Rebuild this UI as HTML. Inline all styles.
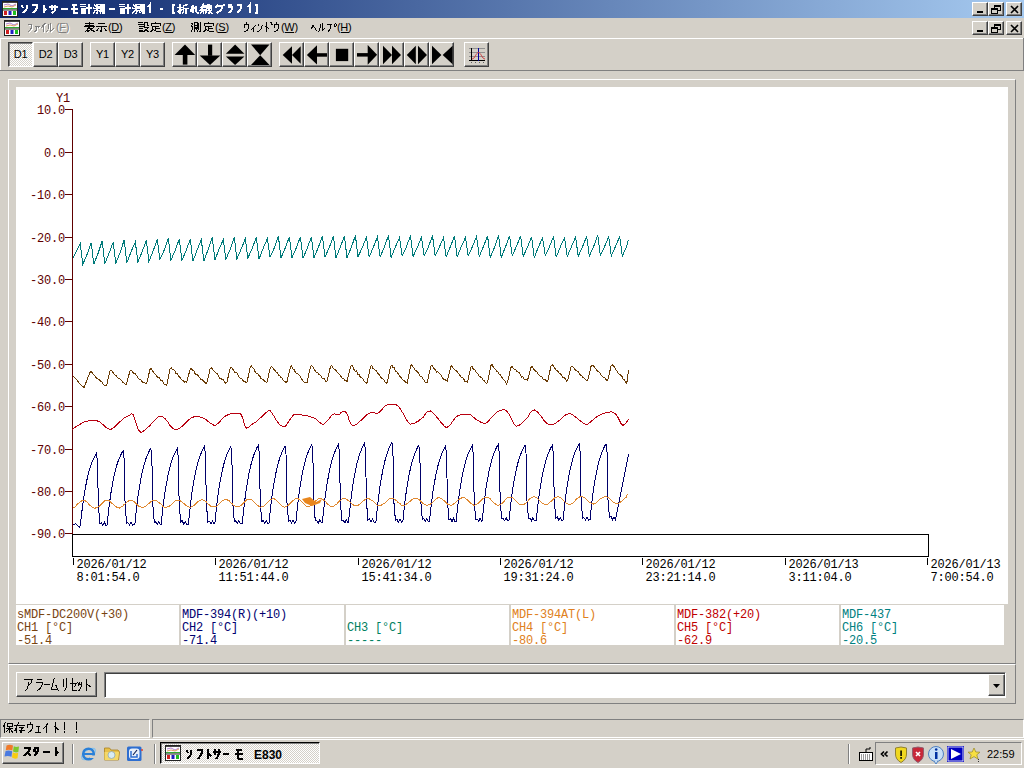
<!DOCTYPE html>
<html><head><meta charset="utf-8"><style>
*{box-sizing:border-box}
html,body{margin:0;padding:0}
body{width:1024px;height:768px;overflow:hidden;position:relative;background:#D4D0C8;font-family:"Liberation Sans",sans-serif;font-size:12px;color:#000}
.a{position:absolute}
.b{position:absolute;background:#D4D0C8;border-top:1px solid #fff;border-left:1px solid #fff;border-right:1px solid #404040;border-bottom:1px solid #404040;box-shadow:inset -1px -1px 0 #808080}
.b.pressed{border-top:1px solid #404040;border-left:1px solid #404040;border-right:1px solid #fff;border-bottom:1px solid #fff;box-shadow:inset 1px 1px 0 #808080;background:repeating-conic-gradient(#fff 0 25%,#D4D0C8 0 50%) 0 0/2px 2px}
.tbt{position:absolute;left:0;right:0;top:5px;text-align:center;font-size:11px;letter-spacing:-0.3px}
.title{left:0;top:0;width:1024px;height:18px;background:linear-gradient(to right,#0A246A,#A6CAF0)}
.ttext{left:20px;top:1px;color:#fff;font-weight:bold;font-size:13px;white-space:nowrap;letter-spacing:-0.3px}
.menu{top:20px;font-size:12px;white-space:nowrap}
.ax{position:absolute;font-family:"Liberation Mono",monospace;font-size:12px;color:#600000;letter-spacing:-0.2px;line-height:13px;white-space:nowrap;transform:scaleY(1.15)}
.dl{position:absolute;font-family:"Liberation Mono",monospace;font-size:12px;color:#000;line-height:13px;white-space:nowrap;letter-spacing:-0.2px;transform:scaleY(1.1);transform-origin:0 0}
.lc{position:absolute;top:605px;width:163px;height:40px;background:#fff;font-family:"Liberation Mono",monospace;font-size:12px;line-height:13px;white-space:nowrap;letter-spacing:-0.2px;overflow:hidden}
.lc div{transform:scaleY(1.12);transform-origin:0 0;margin-left:0px;height:13px;position:relative;top:2px}
.sunk{position:absolute;border-top:1px solid #808080;border-left:1px solid #808080;border-right:1px solid #fff;border-bottom:1px solid #fff}
</style></head><body>
<div class="a title"></div>
<div class="a" style="left:2px;top:1px"><svg width="16" height="16" viewBox="0 0 16 16"><rect x="0.5" y="0.5" width="15" height="15" fill="#fff" stroke="#222"/><rect x="1" y="7" width="14" height="1.2" fill="#3a3"/><rect x="1" y="1" width="14" height="1" fill="#444"/><polyline points="2,4 6,3 10,5 14,3" fill="none" stroke="#b080d0"/><polyline points="2,6 6,5 10,6 14,4" fill="none" stroke="#e0a060"/><rect x="2" y="10" width="3" height="4" fill="#d02020"/><rect x="6.5" y="10" width="3" height="4" fill="#2020c0"/><rect x="11" y="10" width="3" height="4" fill="#20c020"/><rect x="0" y="8.5" width="16" height="1" fill="#222"/></svg></div>

<div class="b wb" style="left:972px;top:2px;width:16px;height:14px"><div style="position:absolute;left:4px;top:8px;width:6px;height:2px;background:#000"></div></div>
<div class="b wb" style="left:988px;top:2px;width:16px;height:14px"><svg width="16" height="14" style="position:absolute;left:0;top:0"><rect x="5.5" y="2.5" width="6" height="5" fill="none" stroke="#000"/><line x1="5" y1="3" x2="12" y2="3" stroke="#000" stroke-width="2"/><rect x="2.5" y="5.5" width="6" height="5" fill="#D4D0C8" stroke="#000"/><line x1="2" y1="6" x2="9" y2="6" stroke="#000" stroke-width="2"/></svg></div>
<div class="b wb" style="left:1006px;top:2px;width:16px;height:14px"><svg width="16" height="14" style="position:absolute;left:0;top:0"><path d="M4,3 L11,10 M11,3 L4,10" stroke="#000" stroke-width="1.6"/></svg></div>
<div class="a" style="left:4px;top:20px"><svg width="16" height="16" viewBox="0 0 16 16"><rect x="0.5" y="0.5" width="15" height="15" fill="#fff" stroke="#222"/><rect x="1" y="7" width="14" height="1.2" fill="#3a3"/><rect x="1" y="1" width="14" height="1" fill="#444"/><polyline points="2,4 6,3 10,5 14,3" fill="none" stroke="#b080d0"/><polyline points="2,6 6,5 10,6 14,4" fill="none" stroke="#e0a060"/><rect x="2" y="10" width="3" height="4" fill="#d02020"/><rect x="6.5" y="10" width="3" height="4" fill="#2020c0"/><rect x="11" y="10" width="3" height="4" fill="#20c020"/><rect x="0" y="8.5" width="16" height="1" fill="#222"/></svg></div>

<div class="b wb" style="left:972px;top:21px;width:16px;height:14px"><div style="position:absolute;left:4px;top:8px;width:6px;height:2px;background:#000"></div></div>
<div class="b wb" style="left:988px;top:21px;width:16px;height:14px"><svg width="16" height="14" style="position:absolute;left:0;top:0"><rect x="5.5" y="2.5" width="6" height="5" fill="none" stroke="#000"/><line x1="5" y1="3" x2="12" y2="3" stroke="#000" stroke-width="2"/><rect x="2.5" y="5.5" width="6" height="5" fill="#D4D0C8" stroke="#000"/><line x1="2" y1="6" x2="9" y2="6" stroke="#000" stroke-width="2"/></svg></div>
<div class="b wb" style="left:1006px;top:21px;width:16px;height:14px"><svg width="16" height="14" style="position:absolute;left:0;top:0"><path d="M4,3 L11,10 M11,3 L4,10" stroke="#000" stroke-width="1.6"/></svg></div>
<div class="a" style="left:0;top:38px;width:1024px;height:1px;background:#fff"></div>
<div class="a" style="left:0;top:70px;width:1024px;height:1px;background:#808080"></div>
<div class="a" style="left:1023px;top:38px;width:1px;height:33px;background:#808080"></div>
<div class="a" style="left:0;top:38px;width:1px;height:32px;background:#fff"></div>
<div class="b pressed" style="left:8px;top:42px;width:25px;height:25px"><span class="tbt">D1</span></div>
<div class="b" style="left:33px;top:42px;width:25px;height:25px"><span class="tbt">D2</span></div>
<div class="b" style="left:58px;top:42px;width:25px;height:25px"><span class="tbt">D3</span></div>
<div class="b" style="left:90px;top:42px;width:25px;height:25px"><span class="tbt">Y1</span></div>
<div class="b" style="left:115px;top:42px;width:25px;height:25px"><span class="tbt">Y2</span></div>
<div class="b" style="left:140px;top:42px;width:25px;height:25px"><span class="tbt">Y3</span></div>
<div class="b" style="left:172px;top:42px;width:25px;height:25px"><svg width="25" height="25" style="position:absolute;left:0;top:0"><polygon points="1.6,11.9 12,1.6 22.2,11.9" fill="#000"/><rect x="9.8" y="11.5" width="4.6" height="10.1" fill="#000"/></svg></div>
<div class="b" style="left:197px;top:42px;width:25px;height:25px"><svg width="25" height="25" style="position:absolute;left:0;top:0"><polygon points="1.7,12.4 12,22.1 22.3,12.4" fill="#000"/><rect x="10" y="1.6" width="4.2" height="11.2" fill="#000"/></svg></div>
<div class="b" style="left:222px;top:42px;width:25px;height:25px"><svg width="25" height="25" style="position:absolute;left:0;top:0"><polygon points="2.9,10.8 12.1,1.6 21.4,10.8" fill="#000"/><polygon points="2.9,13.4 12.1,22.1 21.4,13.4" fill="#000"/></svg></div>
<div class="b" style="left:247px;top:42px;width:25px;height:25px"><svg width="25" height="25" style="position:absolute;left:0;top:0"><polygon points="3,1.6 21.5,1.6 12.2,12.2" fill="#000"/><polygon points="3,22.1 21.5,22.1 12.2,12.2" fill="#000"/></svg></div>
<div class="b" style="left:279px;top:42px;width:25px;height:25px"><svg width="25" height="25" style="position:absolute;left:0;top:0"><polygon points="2.7,11.9 12,3.2 12,20.7" fill="#000"/><polygon points="12,11.9 20.7,3.2 20.7,20.7" fill="#000"/></svg></div>
<div class="b" style="left:304px;top:42px;width:25px;height:25px"><svg width="25" height="25" style="position:absolute;left:0;top:0"><polygon points="1.9,11.9 12,2.3 12,21.6" fill="#000"/><rect x="11.5" y="10.2" width="10.5" height="3.5" fill="#000"/></svg></div>
<div class="b" style="left:329px;top:42px;width:25px;height:25px"><svg width="25" height="25" style="position:absolute;left:0;top:0"><rect x="5.9" y="5.8" width="12.3" height="12.3" fill="#000"/></svg></div>
<div class="b" style="left:354px;top:42px;width:25px;height:25px"><svg width="25" height="25" style="position:absolute;left:0;top:0"><polygon points="22.1,11.8 12.7,2 12.7,21.7" fill="#000"/><rect x="2" y="10.1" width="11" height="3.5" fill="#000"/></svg></div>
<div class="b" style="left:379px;top:42px;width:25px;height:25px"><svg width="25" height="25" style="position:absolute;left:0;top:0"><polygon points="3,2.8 12,12 3,21.3" fill="#000"/><polygon points="12,2.8 21,12 12,21.3" fill="#000"/></svg></div>
<div class="b" style="left:404px;top:42px;width:25px;height:25px"><svg width="25" height="25" style="position:absolute;left:0;top:0"><polygon points="1.8,12 10.8,2.8 10.8,21.3" fill="#000"/><polygon points="22,12 13,2.8 13,21.3" fill="#000"/></svg></div>
<div class="b" style="left:429px;top:42px;width:25px;height:25px"><svg width="25" height="25" style="position:absolute;left:0;top:0"><polygon points="2,2.8 11.4,12 2,21.3" fill="#000"/><polygon points="22.6,2.8 12.7,12 22.6,21.3" fill="#000"/></svg></div>
<div class="b" style="left:464px;top:42px;width:25px;height:25px"><svg width="25" height="25" style="position:absolute;left:0;top:0"><g stroke-width="1" shape-rendering="crispEdges"><line x1="4" y1="5.5" x2="20" y2="5.5" stroke="#909090"/><line x1="4" y1="9.5" x2="20" y2="9.5" stroke="#909090"/><line x1="4" y1="13.5" x2="20" y2="13.5" stroke="#909090"/><line x1="4" y1="17.5" x2="20" y2="17.5" stroke="#000"/><line x1="6.5" y1="5" x2="6.5" y2="18" stroke="#000"/><line x1="13.5" y1="5" x2="13.5" y2="18" stroke="#0000A0"/></g><path d="M7,16 C10,16 11,9.5 13.5,9.5 C16,9.5 17,16 20,16" fill="none" stroke="#D04040" stroke-width="1"/><g fill="#606060"><rect x="6" y="19" width="1" height="1"/><rect x="10" y="19" width="1" height="1"/><rect x="14" y="19" width="1" height="1"/><rect x="18" y="19" width="1" height="1"/></g></svg></div>
<!-- chart frame -->
<div class="a" style="left:8px;top:79px;width:1008px;height:585px;border-top:1px solid #fff;border-left:1px solid #fff;border-right:1px solid #808080;border-bottom:1px solid #808080"></div>
<div class="a" style="left:16px;top:87px;width:992px;height:517px;background:#fff"></div>
<svg class="a" style="left:0;top:0" width="1024" height="768">
<g stroke="#600000" stroke-width="1" shape-rendering="crispEdges">
<line x1="72.5" y1="109" x2="72.5" y2="534"/>
<line x1="65" y1="109.5" x2="72" y2="109.5"/><line x1="65" y1="152.5" x2="72" y2="152.5"/><line x1="65" y1="194.5" x2="72" y2="194.5"/><line x1="65" y1="237.5" x2="72" y2="237.5"/><line x1="65" y1="279.5" x2="72" y2="279.5"/><line x1="65" y1="321.5" x2="72" y2="321.5"/><line x1="65" y1="364.5" x2="72" y2="364.5"/><line x1="65" y1="406.5" x2="72" y2="406.5"/><line x1="65" y1="449.5" x2="72" y2="449.5"/><line x1="65" y1="491.5" x2="72" y2="491.5"/><line x1="65" y1="533.5" x2="72" y2="533.5"/>
</g>
<g stroke="#000" stroke-width="1" shape-rendering="crispEdges" fill="none">
<rect x="72.5" y="534.5" width="856" height="22"/>
<line x1="73.5" y1="558" x2="73.5" y2="565"/><line x1="215.5" y1="558" x2="215.5" y2="565"/><line x1="358.5" y1="558" x2="358.5" y2="565"/><line x1="500.5" y1="558" x2="500.5" y2="565"/><line x1="642.5" y1="558" x2="642.5" y2="565"/><line x1="785.5" y1="558" x2="785.5" y2="565"/><line x1="927.5" y1="558" x2="927.5" y2="565"/>
</g>
<polyline shape-rendering="crispEdges" fill="none" stroke="#007A7A" stroke-width="1" points="73.0,258.0 80.2,243.8 82.8,264.5 87.0,254.5 91.2,242.7 93.8,264.2 98.0,253.5 102.2,240.9 104.8,263.9 109.0,253.3 113.2,242.3 115.8,263.5 120.0,252.8 124.2,239.9 126.8,262.9 131.0,251.9 135.3,242.0 137.9,262.0 142.1,251.9 146.3,240.3 148.9,261.5 153.1,251.1 157.3,239.4 159.9,259.5 164.1,250.4 168.3,238.3 170.9,260.4 175.1,250.4 179.3,239.0 181.9,260.5 186.1,250.5 190.3,239.1 192.9,261.3 197.1,250.0 201.3,239.7 203.9,261.1 208.1,249.6 212.3,237.4 214.9,260.1 219.1,249.1 223.3,239.5 225.9,259.4 230.1,249.4 234.3,237.5 236.9,258.8 241.1,249.2 245.3,238.8 247.9,258.1 252.1,248.4 256.4,237.5 259.0,259.2 263.2,248.3 267.4,238.4 270.0,256.8 274.2,248.2 278.4,236.5 281.0,257.8 285.2,248.0 289.4,236.9 292.0,257.6 296.2,248.1 300.4,236.9 303.0,258.1 307.2,248.4 311.4,236.8 314.0,257.7 318.2,247.7 322.4,236.0 325.0,256.9 329.2,247.7 333.4,235.9 336.0,257.9 340.2,247.2 344.4,236.4 347.0,257.5 351.2,247.8 355.4,235.5 358.0,256.7 362.2,247.9 366.5,237.1 369.1,257.1 373.3,247.3 377.5,236.8 380.1,257.0 384.3,247.2 388.5,235.3 391.1,257.5 395.3,247.1 399.5,237.6 402.1,255.9 406.3,247.2 410.5,235.5 413.1,256.3 417.3,247.5 421.5,237.2 424.1,255.9 428.3,247.3 432.5,235.6 435.1,255.6 439.3,247.1 443.5,237.6 446.1,256.9 450.3,246.9 454.5,236.0 457.1,257.0 461.3,246.7 465.5,237.3 468.1,255.9 472.3,246.9 476.6,236.4 479.2,256.8 483.4,246.5 487.6,236.1 490.2,257.4 494.4,247.5 498.6,235.1 501.2,257.5 505.4,247.1 509.6,236.0 512.2,255.7 516.4,246.5 520.6,235.9 523.2,256.3 527.4,247.3 531.6,236.7 534.2,257.8 538.4,247.0 542.6,237.8 545.2,255.3 549.4,247.0 553.6,236.2 556.2,257.3 560.4,246.7 564.6,237.5 567.2,256.7 571.4,246.7 575.6,237.1 578.2,256.3 582.4,247.1 586.7,236.1 589.3,256.0 593.5,247.0 597.7,235.0 600.3,255.3 604.5,246.8 608.7,236.6 611.3,255.9 615.5,246.4 619.7,236.6 622.3,256.0 626.5,247.1 628.5,239.6"/>
<polyline shape-rendering="crispEdges" fill="none" stroke="#6A3C06" stroke-width="1" points="73.0,375.7 76.0,379.0 80.0,384.0 84.0,387.5 89.8,372.9 91.0,371.7 92.2,372.8 93.4,374.2 94.6,375.5 95.8,377.4 97.0,378.5 98.2,379.2 99.5,380.0 100.7,381.4 101.9,382.1 103.1,384.1 104.3,385.6 105.5,386.0 106.5,385.9 109.8,371.5 111.0,370.3 112.3,371.5 113.5,373.3 114.7,374.9 115.9,375.2 117.1,377.3 118.3,378.1 119.5,378.8 120.7,379.8 121.9,381.1 123.1,382.7 124.3,383.1 125.5,384.8 126.5,384.0 129.9,371.1 131.1,369.9 132.3,371.5 133.5,373.1 134.7,373.0 135.9,375.0 137.1,376.1 138.3,378.3 139.6,379.5 140.8,379.4 142.0,381.6 143.2,382.5 144.4,382.4 145.6,383.9 146.6,383.7 150.0,369.5 151.2,368.3 152.4,370.5 153.6,372.6 154.8,373.9 156.0,375.1 157.2,376.6 158.4,377.7 159.6,378.0 160.8,380.4 162.0,380.5 163.2,382.1 164.4,384.8 165.7,384.5 166.7,385.2 170.0,368.8 171.2,367.6 172.4,370.0 173.6,369.8 174.8,370.8 176.0,373.9 177.2,373.5 178.5,376.3 179.7,377.1 180.9,378.7 182.1,380.1 183.3,380.4 184.5,382.0 185.7,381.5 186.7,382.2 190.1,369.5 191.3,368.3 192.5,370.4 193.7,370.5 194.9,373.3 196.1,375.0 197.3,374.3 198.5,376.1 199.7,377.9 200.9,379.6 202.1,379.5 203.3,380.6 204.5,381.9 205.8,383.8 206.8,383.3 210.1,369.0 211.3,367.8 212.5,369.2 213.7,370.6 214.9,371.8 216.1,373.2 217.3,373.8 218.6,375.9 219.8,378.1 221.0,378.1 222.2,380.0 223.4,379.8 224.6,382.1 225.8,383.4 226.8,382.5 230.2,368.5 231.4,367.3 232.6,369.0 233.8,370.8 235.0,372.7 236.2,372.4 237.4,373.6 238.6,376.3 239.8,377.9 241.0,378.3 242.2,379.3 243.4,381.1 244.6,381.2 245.9,382.5 246.9,382.7 250.2,367.3 251.4,366.1 252.6,367.5 253.8,368.9 255.0,371.4 256.2,373.4 257.4,373.3 258.7,375.6 259.9,376.3 261.1,378.6 262.3,379.4 263.5,380.0 264.7,381.1 265.9,382.0 266.9,382.7 270.3,367.6 271.5,366.4 272.7,367.4 273.9,369.2 275.1,370.5 276.3,372.9 277.5,372.8 278.7,375.9 279.9,376.0 281.1,377.5 282.3,378.5 283.5,380.5 284.7,381.6 286.0,382.3 287.0,381.8 290.3,367.4 291.5,366.2 292.7,368.8 293.9,369.4 295.1,371.6 296.3,373.5 297.5,373.9 298.8,374.7 300.0,376.1 301.2,378.5 302.4,379.7 303.6,381.6 304.8,382.7 306.0,382.6 307.0,382.9 310.4,366.7 311.6,365.5 312.8,366.5 314.0,369.1 315.2,370.8 316.4,372.3 317.6,372.2 318.8,374.8 320.0,374.9 321.2,376.4 322.4,378.3 323.6,378.1 324.8,379.3 326.1,382.1 327.1,381.1 330.4,366.8 331.6,365.6 332.8,367.5 334.0,369.2 335.2,369.1 336.4,371.2 337.6,372.7 338.9,374.1 340.1,374.8 341.3,376.9 342.5,379.0 343.7,378.9 344.9,380.5 346.1,380.8 347.1,381.3 350.5,366.6 351.7,365.4 352.9,366.4 354.1,369.7 355.3,371.3 356.5,370.9 357.7,374.2 358.9,374.4 360.1,376.6 361.3,377.9 362.5,378.3 363.7,380.4 364.9,381.7 366.2,383.3 367.2,382.3 370.5,366.5 371.7,365.3 372.9,368.2 374.1,369.2 375.3,370.5 376.5,371.0 377.7,373.3 379.0,374.4 380.2,376.6 381.4,377.9 382.6,379.0 383.8,379.5 385.0,381.9 386.2,383.2 387.2,382.6 390.6,366.3 391.8,365.1 393.0,367.4 394.2,367.9 395.4,371.3 396.6,371.1 397.8,373.0 399.0,375.3 400.2,376.5 401.4,377.9 402.6,379.5 403.8,380.4 405.0,381.5 406.3,382.6 407.3,383.0 410.6,366.0 411.8,364.8 413.0,367.3 414.2,368.5 415.4,370.5 416.6,371.1 417.8,372.4 419.1,374.1 420.3,376.6 421.5,376.2 422.7,378.6 423.9,379.4 425.1,381.9 426.3,382.3 427.3,382.3 430.7,366.5 431.9,365.3 433.1,367.1 434.3,369.1 435.5,369.6 436.7,372.1 437.9,371.8 439.1,373.4 440.3,374.4 441.5,375.7 442.7,378.4 443.9,379.5 445.1,379.5 446.4,380.7 447.4,381.1 450.7,366.7 451.9,365.5 453.1,368.0 454.3,369.4 455.5,370.6 456.7,371.1 457.9,373.0 459.2,374.0 460.4,376.1 461.6,377.5 462.8,378.0 464.0,379.5 465.2,381.9 466.4,381.6 467.4,382.3 470.8,367.4 472.0,366.2 473.2,369.0 474.4,369.3 475.6,371.2 476.8,372.7 478.0,374.2 479.2,376.3 480.4,377.0 481.6,377.5 482.8,380.0 484.0,380.5 485.2,382.1 486.5,383.6 487.5,382.8 490.8,365.8 492.0,364.6 493.2,366.9 494.4,368.2 495.6,369.8 496.8,371.2 498.0,372.1 499.3,374.3 500.5,374.7 501.7,377.1 502.9,378.8 504.1,379.8 505.3,381.4 506.5,383.7 507.5,382.3 510.9,367.5 512.1,366.3 513.3,368.5 514.5,369.4 515.7,369.4 516.9,371.2 518.1,372.1 519.3,372.9 520.5,375.0 521.7,377.0 522.9,376.8 524.1,379.0 525.3,379.7 526.6,379.5 527.6,380.0 530.9,367.5 532.1,366.3 533.3,368.9 534.5,369.9 535.7,371.3 536.9,371.8 538.1,374.1 539.4,375.6 540.6,376.7 541.8,377.0 543.0,379.0 544.2,379.6 545.4,379.9 546.6,381.0 547.6,381.7 551.0,365.9 552.2,364.7 553.4,365.6 554.6,367.8 555.8,369.7 557.0,370.7 558.2,371.7 559.4,373.5 560.6,374.0 561.8,375.6 563.0,377.5 564.2,377.9 565.4,378.6 566.7,381.4 567.7,380.2 571.0,367.2 572.2,366.0 573.4,367.3 574.6,369.1 575.8,370.5 577.0,371.0 578.2,371.8 579.5,373.4 580.7,375.9 581.9,375.7 583.1,377.6 584.3,378.1 585.5,379.3 586.7,380.4 587.7,380.8 591.0,366.5 592.2,365.3 593.5,365.9 594.7,367.5 595.9,368.9 597.1,370.9 598.3,371.2 599.5,372.3 600.7,374.5 601.9,375.6 603.1,377.4 604.3,377.1 605.5,379.0 606.8,380.2 607.8,380.1 611.1,365.8 612.3,364.6 613.5,366.0 614.7,367.4 615.9,369.9 617.1,370.8 618.3,373.3 619.5,374.2 620.8,375.2 622.0,376.5 623.2,379.5 624.4,379.9 625.6,382.5 626.8,383.2 628.5,370.2"/>
<polyline shape-rendering="crispEdges" fill="none" stroke="#B80010" stroke-width="1" points="72.6,429.6 73.7,428.3 75.3,427.1 77.0,425.9 78.8,425.1 80.5,424.0 82.4,422.8 84.2,421.8 85.8,421.5 87.2,421.3 88.3,420.7 89.6,420.1 91.1,420.2 93.0,420.3 95.2,420.6 97.5,421.0 99.9,421.9 102.4,424.1 105.0,426.7 107.7,428.3 110.4,429.6 113.1,428.1 115.8,425.9 118.5,423.1 121.0,420.8 123.5,418.5 125.8,417.2 128.0,416.1 129.8,415.5 130.9,414.1 131.6,413.7 132.2,414.1 133.3,414.9 134.8,419.0 136.4,424.6 138.5,430.0 141.2,432.6 145.0,430.1 149.6,425.8 154.2,420.6 157.9,417.2 160.2,416.0 161.7,416.5 163.1,417.1 164.9,418.6 167.4,421.2 170.1,425.5 173.1,428.7 176.3,429.9 179.9,428.2 183.9,424.8 187.8,420.7 191.3,417.9 194.3,416.7 196.9,416.5 199.4,416.6 201.8,417.6 204.2,418.2 206.5,420.1 208.7,422.0 210.6,423.2 212.0,423.8 213.1,424.8 214.3,425.6 215.9,425.0 218.2,423.4 220.8,420.5 223.6,417.3 226.4,415.5 229.2,414.3 232.1,413.5 234.8,413.4 237.0,413.2 238.5,413.4 239.6,413.8 240.5,413.7 241.4,415.2 242.5,417.6 243.6,421.2 244.7,425.2 245.7,427.3 246.5,428.0 247.2,428.0 248.0,427.7 249.3,426.7 251.2,424.9 253.6,423.3 256.2,421.8 258.7,419.2 261.3,417.1 263.9,414.4 266.4,412.3 268.4,410.7 269.4,410.2 269.8,410.2 270.2,410.7 271.4,412.4 273.7,415.7 276.8,421.0 280.0,424.9 283.1,426.9 285.8,426.0 288.5,421.7 291.1,418.0 293.8,414.6 296.7,414.1 299.7,414.1 302.7,415.1 305.5,415.6 308.1,416.1 310.6,416.8 313.0,417.7 315.3,418.3 317.3,420.1 319.2,422.1 321.1,423.6 323.1,424.5 325.5,422.8 328.1,420.0 330.7,416.4 332.9,414.5 334.7,413.9 336.2,414.2 337.5,414.2 338.8,414.4 339.9,413.9 340.8,412.7 341.8,412.1 342.7,411.8 343.6,411.3 344.5,411.4 345.4,411.8 346.6,412.8 347.9,415.9 349.2,420.7 350.9,424.1 353.4,425.9 357.1,423.8 361.6,419.8 366.2,415.3 370.0,412.9 372.5,412.1 374.3,412.8 375.9,413.6 377.8,413.1 380.1,411.6 382.6,408.7 385.1,406.0 387.6,404.7 390.1,404.0 392.7,404.1 395.1,404.2 397.3,405.4 399.0,406.7 400.4,409.2 401.8,411.5 403.2,413.5 404.7,416.7 406.3,419.3 408.0,422.0 410.0,424.1 412.4,423.8 415.2,422.8 418.1,421.2 420.8,419.1 423.2,417.2 425.5,413.8 427.8,411.5 430.5,410.9 433.9,413.7 437.7,418.3 441.3,422.8 444.2,426.0 445.9,427.4 446.8,427.8 447.6,427.1 448.8,426.0 450.6,424.3 452.8,421.1 455.1,418.1 457.6,415.8 460.5,414.7 463.7,414.0 466.8,414.0 469.3,414.4 470.9,415.0 471.8,415.9 472.7,416.9 474.2,417.9 476.5,419.8 479.2,421.3 482.2,422.9 484.9,423.6 487.5,422.1 490.1,419.1 492.6,416.2 494.7,414.3 496.4,412.4 497.8,411.5 499.1,411.0 500.5,410.6 502.1,410.0 503.8,409.7 505.5,410.1 507.4,411.8 509.4,414.7 511.6,419.6 513.9,423.7 516.2,426.2 518.6,425.5 521.1,423.9 523.5,421.4 525.9,419.4 528.1,416.6 530.1,413.2 532.2,411.0 534.7,409.9 537.7,412.2 541.1,416.3 544.5,421.2 547.4,423.8 549.6,424.8 551.5,424.6 553.2,424.2 555.2,423.4 557.6,421.8 560.2,419.7 562.7,417.4 565.0,415.3 566.9,414.2 568.5,414.0 570.0,413.9 571.8,414.1 573.9,415.7 576.2,417.5 578.5,419.6 580.6,421.2 582.4,422.3 583.9,423.7 585.6,424.4 587.5,424.2 589.9,422.4 592.6,420.2 595.4,417.8 598.2,415.7 601.2,414.3 604.4,413.1 607.4,412.6 609.9,412.0 611.8,411.9 613.2,412.4 614.5,413.3 615.8,414.1 617.3,416.2 618.9,419.2 620.3,422.2 621.6,424.5 622.5,425.1 623.2,425.6 623.9,424.6 624.6,424.2 625.6,423.3 626.7,421.8 627.8,420.6 628.5,419.4"/>
<polyline shape-rendering="crispEdges" fill="none" stroke="#00006A" stroke-width="1" points="73.3,525.0 75.6,523.4 77.5,525.5 79.7,527.3 80.4,525.2 81.2,517.2 82.7,504.8 84.2,494.3 85.8,485.5 87.3,478.2 88.8,472.1 90.3,466.9 91.8,462.6 93.4,459.0 94.9,456.0 96.4,453.5 97.4,461.5 98.4,505.2 99.9,523.2 101.4,522.9 102.9,525.2 104.4,522.2 105.9,525.2 107.1,525.0 107.9,517.0 109.4,504.0 110.9,493.1 112.5,484.0 114.0,476.3 115.5,469.9 117.0,464.6 118.5,460.1 120.1,456.4 121.6,453.2 123.1,450.6 124.1,458.6 125.1,505.0 126.6,523.0 128.1,522.8 129.6,525.0 131.1,522.0 132.6,525.0 134.8,524.7 135.6,516.7 137.1,503.2 138.6,492.0 140.2,482.6 141.7,474.7 143.2,468.1 144.7,462.6 146.2,458.0 147.8,454.1 149.3,450.9 150.8,448.2 151.8,456.2 152.8,504.7 154.3,522.7 155.8,521.9 157.3,524.7 158.8,521.7 160.3,524.7 161.2,524.4 162.0,516.4 163.5,503.1 165.0,492.0 166.6,482.7 168.1,474.9 169.6,468.4 171.1,463.0 172.6,458.4 174.2,454.6 175.7,451.4 177.2,448.7 178.2,456.7 179.2,504.4 180.7,522.4 182.2,520.4 183.7,524.4 185.2,521.4 186.7,524.4 188.4,524.1 189.2,516.1 190.7,502.4 192.2,491.0 193.8,481.4 195.3,473.4 196.8,466.7 198.3,461.1 199.8,456.4 201.4,452.5 202.9,449.2 204.4,446.4 205.4,454.4 206.4,504.1 207.9,522.1 209.4,521.2 210.9,524.1 212.4,521.1 213.9,524.1 214.8,523.8 215.6,515.8 217.1,502.2 218.6,490.8 220.2,481.3 221.7,473.3 223.2,466.6 224.7,461.0 226.2,456.3 227.8,452.4 229.3,449.1 230.8,446.4 231.8,454.4 232.8,503.8 234.3,521.8 235.8,520.9 237.3,523.8 238.8,520.8 240.3,523.8 242.3,523.5 243.1,515.5 244.6,501.7 246.1,490.2 247.7,480.5 249.2,472.4 250.7,465.7 252.2,460.0 253.7,455.3 255.3,451.3 256.8,448.0 258.3,445.2 259.3,453.2 260.3,503.5 261.8,521.5 263.3,520.5 264.8,523.5 266.3,520.5 267.8,523.5 269.0,523.2 269.8,515.2 271.3,501.7 272.8,490.4 274.4,480.9 275.9,473.0 277.4,466.4 278.9,460.8 280.4,456.2 282.0,452.3 283.5,449.0 285.0,446.3 286.0,454.3 287.0,503.2 288.5,521.2 290.0,519.8 291.5,523.2 293.0,520.2 294.5,523.2 295.8,522.9 296.6,514.9 298.1,501.1 299.6,489.5 301.2,479.8 302.7,471.7 304.2,464.9 305.7,459.3 307.2,454.5 308.8,450.5 310.3,447.2 311.8,444.4 312.8,452.4 313.8,502.9 315.3,520.9 316.8,520.3 318.3,522.9 319.8,519.9 321.3,522.9 322.4,522.6 323.2,514.6 324.7,500.9 326.2,489.3 327.8,479.7 329.3,471.6 330.8,464.9 332.3,459.2 333.8,454.5 335.4,450.5 336.9,447.2 338.4,444.4 339.4,452.4 340.4,502.6 341.9,520.6 343.4,520.5 344.9,522.6 346.4,519.6 347.9,522.6 348.5,522.3 349.3,514.3 350.8,500.4 352.3,488.7 353.9,479.0 355.4,470.8 356.9,463.9 358.4,458.2 359.9,453.4 361.5,449.4 363.0,446.0 364.5,443.2 365.5,451.2 366.5,502.3 368.0,520.3 369.5,518.6 371.0,522.3 372.5,519.3 374.0,522.3 375.9,522.1 376.7,514.1 378.2,500.0 379.7,488.3 381.3,478.4 382.8,470.2 384.3,463.3 385.8,457.5 387.3,452.7 388.9,448.6 390.4,445.2 391.9,442.4 392.9,450.4 393.9,502.1 395.4,520.1 396.9,519.4 398.4,522.1 399.9,519.1 401.4,522.1 402.8,521.8 403.6,513.8 405.1,500.3 406.6,489.1 408.2,479.7 409.7,471.8 411.2,465.2 412.7,459.7 414.2,455.0 415.8,451.2 417.3,447.9 418.8,445.2 419.8,453.2 420.8,501.8 422.3,519.8 423.8,518.5 425.3,521.8 426.8,518.8 428.3,521.8 429.5,521.5 430.3,513.5 431.8,500.3 433.3,489.3 434.9,480.1 436.4,472.3 437.9,465.9 439.4,460.5 440.9,455.9 442.5,452.1 444.0,449.0 445.5,446.3 446.5,454.3 447.5,501.5 449.0,519.5 450.5,518.5 452.0,521.5 453.5,518.5 455.0,521.5 456.2,521.2 457.0,513.2 458.5,500.0 460.0,488.9 461.6,479.6 463.1,471.9 464.6,465.4 466.1,459.9 467.6,455.4 469.2,451.6 470.7,448.4 472.2,445.7 473.2,453.7 474.2,501.2 475.7,519.2 477.2,519.0 478.7,521.2 480.2,518.2 481.7,521.2 482.2,520.9 483.0,512.9 484.5,499.5 486.0,488.2 487.6,478.8 489.1,471.0 490.6,464.4 492.1,458.8 493.6,454.2 495.2,450.3 496.7,447.1 498.2,444.4 499.2,452.4 500.2,500.9 501.7,518.9 503.2,518.8 504.7,520.9 506.2,517.9 507.7,520.9 509.0,520.6 509.8,512.6 511.3,499.4 512.8,488.3 514.4,479.1 515.9,471.3 517.4,464.8 518.9,459.4 520.4,454.9 522.0,451.1 523.5,447.9 525.0,445.2 526.0,453.2 527.0,500.6 528.5,518.6 530.0,517.9 531.5,520.6 533.0,517.6 534.5,520.6 536.3,520.3 537.1,512.3 538.6,499.2 540.1,488.2 541.7,478.9 543.2,471.2 544.7,464.8 546.2,459.3 547.7,454.8 549.3,451.0 550.8,447.9 552.3,445.2 553.3,453.2 554.3,500.3 555.8,518.3 557.3,516.7 558.8,520.3 560.3,517.3 561.8,520.3 563.1,520.0 563.9,512.0 565.4,498.7 566.9,487.5 568.5,478.1 570.0,470.2 571.5,463.7 573.0,458.2 574.5,453.6 576.1,449.7 577.6,446.5 579.1,443.8 580.1,451.8 581.1,500.0 582.6,518.0 584.1,517.9 585.6,520.0 587.1,517.0 588.6,520.0 590.0,519.7 590.8,511.7 592.3,498.4 593.8,487.3 595.4,477.9 596.9,470.1 598.4,463.6 599.9,458.1 601.4,453.5 603.0,449.7 604.5,446.5 606.0,443.8 607.0,451.8 608.0,499.7 609.5,517.7 611.0,516.1 612.5,519.7 614.0,516.7 615.5,519.7 628.5,454.5"/>
<polyline shape-rendering="crispEdges" fill="none" stroke="#E08830" stroke-width="1" points="73.0,508.1 74.5,507.4 76.0,505.7 77.5,504.1 79.0,502.9 80.5,501.7 82.0,500.5 83.5,500.3 85.0,500.7 86.5,501.6 88.0,503.0 89.5,505.0 91.0,506.0 92.5,507.3 94.0,508.0 95.5,508.0 97.0,507.8 98.5,506.9 100.0,505.5 101.5,503.8 103.0,502.5 104.5,500.8 106.0,500.3 107.5,500.7 109.0,500.7 110.5,501.8 112.0,503.3 113.5,504.7 115.0,506.2 116.5,507.0 118.0,507.7 119.5,508.1 121.0,507.0 122.5,506.4 124.0,504.6 125.5,503.6 127.0,502.0 128.5,501.0 130.0,500.2 131.5,500.2 133.0,501.2 134.5,501.9 136.0,503.3 137.5,505.1 139.0,506.4 140.5,506.8 142.0,507.8 143.5,507.4 145.0,506.7 146.5,505.4 148.0,504.2 149.5,503.2 151.0,501.5 152.5,500.5 154.0,500.1 155.5,500.2 157.0,501.0 158.5,502.4 160.0,503.3 161.5,504.7 163.0,506.3 164.5,507.2 166.0,507.5 167.5,506.9 169.0,506.2 170.5,505.5 172.0,503.8 173.5,502.6 175.0,501.2 176.5,500.2 178.0,500.1 179.5,500.5 181.0,501.3 182.5,502.3 184.0,503.6 185.5,505.0 187.0,506.0 188.5,506.9 190.0,507.3 191.5,506.6 193.0,506.0 194.5,505.0 196.0,503.6 197.5,501.8 199.0,501.1 200.5,500.3 202.0,499.7 203.5,500.1 205.0,500.9 206.5,502.0 208.0,504.0 209.5,505.0 211.0,506.4 212.5,506.6 214.0,506.7 215.5,506.8 217.0,505.8 218.5,504.7 220.0,503.0 221.5,501.5 223.0,500.5 224.5,499.4 226.0,499.6 227.5,500.0 229.0,500.7 230.5,502.3 232.0,503.7 233.5,505.2 235.0,506.2 236.5,506.8 238.0,506.9 239.5,506.5 241.0,505.6 242.5,504.2 244.0,502.6 245.5,501.2 247.0,499.7 248.5,499.5 250.0,499.1 251.5,499.6 253.0,500.9 254.5,502.5 256.0,503.8 257.5,505.4 259.0,506.3 260.5,507.2 262.0,506.8 263.5,506.2 265.0,505.0 266.5,503.7 268.0,502.2 269.5,500.5 271.0,499.3 272.5,498.9 274.0,498.7 275.5,499.6 277.0,501.1 278.5,502.6 280.0,503.7 281.5,505.6 283.0,506.4 284.5,507.2 286.0,506.6 287.5,505.7 289.0,504.6 290.5,503.2 292.0,501.4 293.5,500.2 295.0,499.1 296.5,498.5 298.0,498.7 299.5,499.7 301.0,500.9 302.5,502.4 304.0,504.2 305.5,505.7 307.0,506.4 308.5,506.4 310.0,506.2 311.5,505.4 313.0,504.2 314.5,502.3 316.0,500.7 317.5,499.5 319.0,498.6 320.5,498.2 322.0,498.9 323.5,500.0 325.0,501.1 326.5,502.8 328.0,504.3 329.5,505.6 331.0,506.4 332.5,506.3 334.0,506.0 335.5,504.7 337.0,503.8 338.5,502.0 340.0,500.5 341.5,499.6 343.0,498.5 344.5,498.3 346.0,499.1 347.5,500.0 349.0,501.0 350.5,502.4 352.0,504.0 353.5,504.9 355.0,506.0 356.5,505.7 358.0,505.3 359.5,504.3 361.0,503.1 362.5,501.5 364.0,500.3 365.5,499.2 367.0,498.5 368.5,498.3 370.0,499.3 371.5,500.1 373.0,501.1 374.5,502.7 376.0,504.2 377.5,505.3 379.0,505.3 380.5,505.2 382.0,504.9 383.5,503.8 385.0,502.8 386.5,501.3 388.0,499.8 389.5,498.9 391.0,498.5 392.5,498.7 394.0,498.9 395.5,500.1 397.0,501.2 398.5,502.9 400.0,503.7 401.5,505.2 403.0,505.3 404.5,505.2 406.0,504.3 407.5,503.3 409.0,502.1 410.5,500.9 412.0,499.5 413.5,498.5 415.0,498.5 416.5,498.5 418.0,499.1 419.5,500.0 421.0,501.4 422.5,503.1 424.0,503.8 425.5,504.9 427.0,505.2 428.5,504.9 430.0,504.4 431.5,503.3 433.0,501.9 434.5,500.4 436.0,498.9 437.5,498.0 439.0,497.9 440.5,498.1 442.0,498.8 443.5,500.4 445.0,501.4 446.5,503.1 448.0,504.4 449.5,504.7 451.0,505.4 452.5,504.7 454.0,503.7 455.5,502.5 457.0,500.9 458.5,499.7 460.0,498.5 461.5,498.0 463.0,497.8 464.5,497.7 466.0,498.8 467.5,500.1 469.0,501.5 470.5,502.9 472.0,504.1 473.5,505.1 475.0,505.0 476.5,504.4 478.0,503.5 479.5,502.2 481.0,500.7 482.5,499.0 484.0,498.1 485.5,497.1 487.0,497.3 488.5,497.8 490.0,498.6 491.5,500.3 493.0,501.7 494.5,503.3 496.0,504.4 497.5,505.1 499.0,505.0 500.5,504.1 502.0,503.5 503.5,502.0 505.0,500.2 506.5,498.7 508.0,497.4 509.5,497.2 511.0,497.1 512.5,497.4 514.0,499.0 515.5,500.6 517.0,501.8 518.5,503.6 520.0,504.4 521.5,504.7 523.0,504.9 524.5,504.0 526.0,503.0 527.5,501.4 529.0,499.4 530.5,498.2 532.0,497.4 533.5,496.7 535.0,496.9 536.5,497.8 538.0,498.8 539.5,500.4 541.0,502.0 542.5,503.5 544.0,504.1 545.5,504.5 547.0,504.6 548.5,503.7 550.0,502.2 551.5,501.0 553.0,499.5 554.5,497.9 556.0,497.2 557.5,496.8 559.0,497.0 560.5,497.6 562.0,498.7 563.5,500.6 565.0,502.1 566.5,503.2 568.0,504.1 569.5,504.4 571.0,503.9 572.5,503.3 574.0,501.9 575.5,500.2 577.0,498.6 578.5,497.6 580.0,496.7 581.5,496.7 583.0,496.8 584.5,497.8 586.0,498.9 587.5,500.5 589.0,502.0 590.5,502.9 592.0,503.6 593.5,504.0 595.0,503.4 596.5,502.6 598.0,501.1 599.5,499.6 601.0,498.5 602.5,497.6 604.0,496.9 605.5,496.6 607.0,497.0 608.5,497.7 610.0,499.1 611.5,500.5 613.0,502.2 614.5,502.7 616.0,503.8 617.5,503.6 619.0,503.0 620.5,502.0 622.0,501.1 623.5,499.2 625.0,498.2 626.5,497.1 627.5,493.6"/>

<polygon points="302,499 310,497 316,502 322,499 320,503 312,506 305,503" fill="#E8861E"/>
</svg>
<div class="lc" style="left:16px"></div>
<div class="lc" style="left:181px"></div>
<div class="lc" style="left:346px"></div>
<div class="lc" style="left:511px"></div>
<div class="lc" style="left:676px"></div>
<div class="lc" style="left:841px"></div>
<svg class="a" style="left:0;top:0" width="1024" height="768"><g transform="translate(0,114) scale(1,1.12) translate(0,-114)"><text x="37.00 44.00 51.00 58.00" y="114" font-family="Liberation Mono" font-size="12" fill="#600000">10.0</text></g>
<g transform="translate(0,157) scale(1,1.12) translate(0,-157)"><text x="44.00 51.00 58.00" y="157" font-family="Liberation Mono" font-size="12" fill="#600000">0.0</text></g>
<g transform="translate(0,199) scale(1,1.12) translate(0,-199)"><text x="30.00 37.00 44.00 51.00 58.00" y="199" font-family="Liberation Mono" font-size="12" fill="#600000">-10.0</text></g>
<g transform="translate(0,242) scale(1,1.12) translate(0,-242)"><text x="30.00 37.00 44.00 51.00 58.00" y="242" font-family="Liberation Mono" font-size="12" fill="#600000">-20.0</text></g>
<g transform="translate(0,284) scale(1,1.12) translate(0,-284)"><text x="30.00 37.00 44.00 51.00 58.00" y="284" font-family="Liberation Mono" font-size="12" fill="#600000">-30.0</text></g>
<g transform="translate(0,326) scale(1,1.12) translate(0,-326)"><text x="30.00 37.00 44.00 51.00 58.00" y="326" font-family="Liberation Mono" font-size="12" fill="#600000">-40.0</text></g>
<g transform="translate(0,369) scale(1,1.12) translate(0,-369)"><text x="30.00 37.00 44.00 51.00 58.00" y="369" font-family="Liberation Mono" font-size="12" fill="#600000">-50.0</text></g>
<g transform="translate(0,411) scale(1,1.12) translate(0,-411)"><text x="30.00 37.00 44.00 51.00 58.00" y="411" font-family="Liberation Mono" font-size="12" fill="#600000">-60.0</text></g>
<g transform="translate(0,454) scale(1,1.12) translate(0,-454)"><text x="30.00 37.00 44.00 51.00 58.00" y="454" font-family="Liberation Mono" font-size="12" fill="#600000">-70.0</text></g>
<g transform="translate(0,496) scale(1,1.12) translate(0,-496)"><text x="30.00 37.00 44.00 51.00 58.00" y="496" font-family="Liberation Mono" font-size="12" fill="#600000">-80.0</text></g>
<g transform="translate(0,538) scale(1,1.12) translate(0,-538)"><text x="30.00 37.00 44.00 51.00 58.00" y="538" font-family="Liberation Mono" font-size="12" fill="#600000">-90.0</text></g>
<g transform="translate(0,102) scale(1,1.12) translate(0,-102)"><text x="56.00 63.00" y="102" font-family="Liberation Mono" font-size="12" fill="#600000">Y1</text></g>
<g transform="translate(0,568) scale(1,1.12) translate(0,-568)"><text x="76.50 83.50 90.50 97.50 104.50 111.50 118.50 125.50 132.50 139.50" y="568" font-family="Liberation Mono" font-size="12" fill="#000">2026/01/12</text></g>
<g transform="translate(0,581) scale(1,1.12) translate(0,-581)"><text x="76.50 83.50 90.50 97.50 104.50 111.50 118.50 125.50 132.50" y="581" font-family="Liberation Mono" font-size="12" fill="#000">8:01:54.0</text></g>
<g transform="translate(0,568) scale(1,1.12) translate(0,-568)"><text x="218.50 225.50 232.50 239.50 246.50 253.50 260.50 267.50 274.50 281.50" y="568" font-family="Liberation Mono" font-size="12" fill="#000">2026/01/12</text></g>
<g transform="translate(0,581) scale(1,1.12) translate(0,-581)"><text x="218.50 225.50 232.50 239.50 246.50 253.50 260.50 267.50 274.50 281.50" y="581" font-family="Liberation Mono" font-size="12" fill="#000">11:51:44.0</text></g>
<g transform="translate(0,568) scale(1,1.12) translate(0,-568)"><text x="361.50 368.50 375.50 382.50 389.50 396.50 403.50 410.50 417.50 424.50" y="568" font-family="Liberation Mono" font-size="12" fill="#000">2026/01/12</text></g>
<g transform="translate(0,581) scale(1,1.12) translate(0,-581)"><text x="361.50 368.50 375.50 382.50 389.50 396.50 403.50 410.50 417.50 424.50" y="581" font-family="Liberation Mono" font-size="12" fill="#000">15:41:34.0</text></g>
<g transform="translate(0,568) scale(1,1.12) translate(0,-568)"><text x="503.50 510.50 517.50 524.50 531.50 538.50 545.50 552.50 559.50 566.50" y="568" font-family="Liberation Mono" font-size="12" fill="#000">2026/01/12</text></g>
<g transform="translate(0,581) scale(1,1.12) translate(0,-581)"><text x="503.50 510.50 517.50 524.50 531.50 538.50 545.50 552.50 559.50 566.50" y="581" font-family="Liberation Mono" font-size="12" fill="#000">19:31:24.0</text></g>
<g transform="translate(0,568) scale(1,1.12) translate(0,-568)"><text x="645.50 652.50 659.50 666.50 673.50 680.50 687.50 694.50 701.50 708.50" y="568" font-family="Liberation Mono" font-size="12" fill="#000">2026/01/12</text></g>
<g transform="translate(0,581) scale(1,1.12) translate(0,-581)"><text x="645.50 652.50 659.50 666.50 673.50 680.50 687.50 694.50 701.50 708.50" y="581" font-family="Liberation Mono" font-size="12" fill="#000">23:21:14.0</text></g>
<g transform="translate(0,568) scale(1,1.12) translate(0,-568)"><text x="788.50 795.50 802.50 809.50 816.50 823.50 830.50 837.50 844.50 851.50" y="568" font-family="Liberation Mono" font-size="12" fill="#000">2026/01/13</text></g>
<g transform="translate(0,581) scale(1,1.12) translate(0,-581)"><text x="788.50 795.50 802.50 809.50 816.50 823.50 830.50 837.50 844.50" y="581" font-family="Liberation Mono" font-size="12" fill="#000">3:11:04.0</text></g>
<g transform="translate(0,568) scale(1,1.12) translate(0,-568)"><text x="930.50 937.50 944.50 951.50 958.50 965.50 972.50 979.50 986.50 993.50" y="568" font-family="Liberation Mono" font-size="12" fill="#000">2026/01/13</text></g>
<g transform="translate(0,581) scale(1,1.12) translate(0,-581)"><text x="930.50 937.50 944.50 951.50 958.50 965.50 972.50 979.50 986.50" y="581" font-family="Liberation Mono" font-size="12" fill="#000">7:00:54.0</text></g>
<g transform="translate(0,618) scale(1,1.12) translate(0,-618)"><text x="17.00 24.00 31.00 38.00 45.00 52.00 59.00 66.00 73.00 80.00 87.00 94.00 101.00 108.00 115.00 122.00" y="618" font-family="Liberation Mono" font-size="12" fill="#784410">sMDF-DC200V(+30)</text></g><g transform="translate(0,631) scale(1,1.12) translate(0,-631)"><text x="17.00 24.00 31.00 38.00 45.00 52.00 59.00 66.00" y="631" font-family="Liberation Mono" font-size="12" fill="#784410">CH1 [°C]</text></g><g transform="translate(0,644) scale(1,1.12) translate(0,-644)"><text x="17.00 24.00 31.00 38.00 45.00" y="644" font-family="Liberation Mono" font-size="12" fill="#784410">-51.4</text></g><g transform="translate(0,618) scale(1,1.12) translate(0,-618)"><text x="182.00 189.00 196.00 203.00 210.00 217.00 224.00 231.00 238.00 245.00 252.00 259.00 266.00 273.00 280.00" y="618" font-family="Liberation Mono" font-size="12" fill="#000070">MDF-394(R)(+10)</text></g><g transform="translate(0,631) scale(1,1.12) translate(0,-631)"><text x="182.00 189.00 196.00 203.00 210.00 217.00 224.00 231.00" y="631" font-family="Liberation Mono" font-size="12" fill="#000070">CH2 [°C]</text></g><g transform="translate(0,644) scale(1,1.12) translate(0,-644)"><text x="182.00 189.00 196.00 203.00 210.00" y="644" font-family="Liberation Mono" font-size="12" fill="#000070">-71.4</text></g><g transform="translate(0,631) scale(1,1.12) translate(0,-631)"><text x="347.00 354.00 361.00 368.00 375.00 382.00 389.00 396.00" y="631" font-family="Liberation Mono" font-size="12" fill="#008060">CH3 [°C]</text></g><g transform="translate(0,644) scale(1,1.12) translate(0,-644)"><text x="347.00 354.00 361.00 368.00 375.00" y="644" font-family="Liberation Mono" font-size="12" fill="#008060">-----</text></g><g transform="translate(0,618) scale(1,1.12) translate(0,-618)"><text x="512.00 519.00 526.00 533.00 540.00 547.00 554.00 561.00 568.00 575.00 582.00 589.00" y="618" font-family="Liberation Mono" font-size="12" fill="#E08020">MDF-394AT(L)</text></g><g transform="translate(0,631) scale(1,1.12) translate(0,-631)"><text x="512.00 519.00 526.00 533.00 540.00 547.00 554.00 561.00" y="631" font-family="Liberation Mono" font-size="12" fill="#E08020">CH4 [°C]</text></g><g transform="translate(0,644) scale(1,1.12) translate(0,-644)"><text x="512.00 519.00 526.00 533.00 540.00" y="644" font-family="Liberation Mono" font-size="12" fill="#E08020">-80.6</text></g><g transform="translate(0,618) scale(1,1.12) translate(0,-618)"><text x="677.00 684.00 691.00 698.00 705.00 712.00 719.00 726.00 733.00 740.00 747.00 754.00" y="618" font-family="Liberation Mono" font-size="12" fill="#C00000">MDF-382(+20)</text></g><g transform="translate(0,631) scale(1,1.12) translate(0,-631)"><text x="677.00 684.00 691.00 698.00 705.00 712.00 719.00 726.00" y="631" font-family="Liberation Mono" font-size="12" fill="#C00000">CH5 [°C]</text></g><g transform="translate(0,644) scale(1,1.12) translate(0,-644)"><text x="677.00 684.00 691.00 698.00 705.00" y="644" font-family="Liberation Mono" font-size="12" fill="#C00000">-62.9</text></g><g transform="translate(0,618) scale(1,1.12) translate(0,-618)"><text x="842.00 849.00 856.00 863.00 870.00 877.00 884.00" y="618" font-family="Liberation Mono" font-size="12" fill="#008080">MDF-437</text></g><g transform="translate(0,631) scale(1,1.12) translate(0,-631)"><text x="842.00 849.00 856.00 863.00 870.00 877.00 884.00 891.00" y="631" font-family="Liberation Mono" font-size="12" fill="#008080">CH6 [°C]</text></g><g transform="translate(0,644) scale(1,1.12) translate(0,-644)"><text x="842.00 849.00 856.00 863.00 870.00" y="644" font-family="Liberation Mono" font-size="12" fill="#008080">-20.5</text></g></svg>
<!-- bottom panel -->
<div class="a" style="left:8px;top:664px;width:1008px;height:40px;border-top:1px solid #fff;border-left:1px solid #fff;border-right:1px solid #808080;border-bottom:1px solid #808080"></div>
<div class="b" style="left:16px;top:672px;width:81px;height:25px"></div>
<div class="a" style="left:104px;top:672px;width:902px;height:26px;background:#fff;border-top:1px solid #808080;border-left:1px solid #808080;border-right:1px solid #fff;border-bottom:1px solid #fff;box-shadow:inset 1px 1px 0 #404040"></div>
<div class="b" style="left:988px;top:674px;width:17px;height:22px"><svg width="15" height="20" style="position:absolute;left:0;top:0"><polygon points="4,9 11,9 7.5,13" fill="#000"/></svg></div>
<!-- status bar -->
<div class="sunk" style="left:0;top:719px;width:150px;height:19px"></div>
<div class="sunk" style="left:152px;top:719px;width:872px;height:19px"></div>
<!-- taskbar -->
<div class="a" style="left:0;top:739px;width:1024px;height:29px;background:#D4D0C8;border-top:1px solid #fff"></div>
<div class="b" style="left:2px;top:742px;width:62px;height:22px"><svg width="20" height="20" style="position:absolute;left:0px;top:0px"><path d="M3.5,2.5 Q6.5,1 10,2.5 L9.3,7.5 Q6,6 2.8,7.3Z" fill="#F07A28"/><path d="M10.8,3.2 Q13,4.5 16,3.5 L15.3,9 Q12.5,10 10,8.6Z" fill="#7CC82A"/><path d="M2.6,8 Q5.5,6.8 9.2,8.3 L8.5,13.8 Q5,12.5 1.5,13.5Z" fill="#4A7AE0"/><path d="M9.8,9.3 Q12.5,10.8 15.2,9.8 L14.5,15.2 Q11.5,16.3 9,14.6Z" fill="#F8CC10"/></svg></div>
<div class="a" style="left:72px;top:744px;width:2px;height:20px;border-left:1px solid #808080;border-right:1px solid #fff"></div>
<svg class="a" style="left:80px;top:745px" width="64" height="18">
<ellipse cx="8.5" cy="9" rx="8" ry="4" transform="rotate(-35 8.5 9)" fill="none" stroke="#7EC0F0" stroke-width="1"/>
<circle cx="8.5" cy="9" r="5.3" fill="none" stroke="#2A80D8" stroke-width="2.6"/><rect x="4" y="8" width="9.5" height="2" fill="#2A80D8"/><rect x="10" y="10.5" width="5" height="2.5" fill="#D4D0C8"/>
<path d="M24.5,3 L29.5,3 L31,5 L38,5 L39.5,7 L38.5,15 L24.5,15Z" fill="#E8C048" stroke="#A88020" stroke-width="0.8"/><path d="M24.5,7 H39 L38,15 H24.5Z" fill="#F4D868"/><circle cx="31.5" cy="10" r="3.5" fill="#D8ECF4" stroke="#90A8B0" stroke-width="0.8"/>
<rect x="47" y="1.5" width="14.5" height="14.5" rx="1.5" fill="#2E6ED0"/><rect x="49" y="3.5" width="10.5" height="10.5" rx="3" fill="#E8F0FA"/><path d="M51,6 V12 H57 V9" fill="none" stroke="#2E6ED0" stroke-width="1.5"/><path d="M53,10 L57,5" stroke="#102050" stroke-width="1.2"/><circle cx="62" cy="5" r="1" fill="#E04030"/>
</svg>
<div class="a" style="left:154px;top:744px;width:2px;height:20px;border-left:1px solid #808080;border-right:1px solid #fff"></div>
<div class="a" style="left:160px;top:742px;width:160px;height:22px;border-top:1px solid #000;border-left:1px solid #000;border-right:1px solid #fff;border-bottom:1px solid #fff;box-shadow:inset 1px 1px 0 #808080;background:repeating-conic-gradient(#fff 0 25%,#D4D0C8 0 50%) 0 0/2px 2px"><div style="position:absolute;left:4px;top:2px"><svg width="16" height="16" viewBox="0 0 16 16"><rect x="0.5" y="0.5" width="15" height="15" fill="#fff" stroke="#222"/><rect x="1" y="7" width="14" height="1.2" fill="#3a3"/><rect x="1" y="1" width="14" height="1" fill="#444"/><polyline points="2,4 6,3 10,5 14,3" fill="none" stroke="#b080d0"/><polyline points="2,6 6,5 10,6 14,4" fill="none" stroke="#e0a060"/><rect x="2" y="10" width="3" height="4" fill="#d02020"/><rect x="6.5" y="10" width="3" height="4" fill="#2020c0"/><rect x="11" y="10" width="3" height="4" fill="#20c020"/><rect x="0" y="8.5" width="16" height="1" fill="#222"/></svg></div></div>
<div class="a" style="left:848px;top:744px;width:2px;height:20px;border-left:1px solid #808080;border-right:1px solid #fff"></div>
<svg class="a" style="left:858px;top:746px" width="16" height="16"><rect x="1.5" y="6.5" width="13" height="8" fill="#fff" stroke="#000"/><path d="M3,9h10M3,11h10M3,13h10" stroke="#000" stroke-width="0.8" stroke-dasharray="1 1"/><path d="M8,6 V3 H12 V1" fill="none" stroke="#000"/></svg>
<div class="sunk" style="left:875px;top:742px;width:147px;height:23px"></div>
<svg class="a" style="left:878px;top:744px" width="110" height="20">
<path d="M6,7.5 L3.5,10 L6,12.5 M9.5,7.5 L7,10 L9.5,12.5" fill="none" stroke="#000" stroke-width="1.7"/>
<path d="M17.5,4 Q23,2 28.5,4 L28.5,10 Q28.5,15.5 23,18.5 Q17.5,15.5 17.5,10Z" fill="#F0D820" stroke="#908030"/><rect x="22.2" y="6.5" width="1.8" height="5.5" fill="#202000"/><rect x="22.2" y="13" width="1.8" height="1.8" fill="#202000"/>
<path d="M34.5,4 Q40,2 45.5,4 L45.5,10 Q45.5,15.5 40,18.5 Q34.5,15.5 34.5,10Z" fill="#C82838" stroke="#906070"/><path d="M38,8 L42,12 M42,8 L38,12" stroke="#fff" stroke-width="1.6"/>
<circle cx="58" cy="10" r="7.5" fill="#C8E0F8" stroke="#5080C0"/><rect x="57" y="8" width="2.5" height="7" fill="#0030A0"/><circle cx="58.2" cy="5.5" r="1.3" fill="#0030A0"/><path d="M56,17 L58,20 L60,17" fill="#C8E0F8" stroke="#5080C0"/>
<rect x="69" y="2" width="17" height="16" fill="#0000C0"/><rect x="70" y="3" width="15" height="14" fill="none" stroke="#fff" stroke-width="0.8"/><polygon points="73,5 83,10 73,15" fill="#fff"/>
<polygon points="96,4 97.8,8 102,8.2 98.8,10.8 100,15 96,12.6 92,15 93.2,10.8 90,8.2 94.2,8" fill="#F8E040" stroke="#A09030" stroke-width="0.8"/><rect x="100" y="15" width="1" height="1" fill="#333"/><rect x="100" y="17" width="1" height="1" fill="#333"/>
</svg>
<div class="a" style="left:987px;top:748px;font-size:11px;white-space:nowrap">22:59</div>
<svg class="a" style="left:0;top:0;pointer-events:none" width="1024" height="768"><path transform="translate(21.00,4.50) scale(0.700,0.850)" d="M1,1 L3,4 M9,1 Q9,7 2,10" fill="none" stroke="#fff" stroke-width="2" vector-effect="non-scaling-stroke" stroke-linecap="butt" stroke-linejoin="miter" shape-rendering="crispEdges"/>
<path transform="translate(31.00,4.50) scale(0.700,0.850)" d="M1,1 H9 Q8.5,7 2,10" fill="none" stroke="#fff" stroke-width="2" vector-effect="non-scaling-stroke" stroke-linecap="butt" stroke-linejoin="miter" shape-rendering="crispEdges"/>
<path transform="translate(42.00,4.50) scale(0.500,0.850)" d="M3,0 V10 M3,4 L9,7" fill="none" stroke="#fff" stroke-width="2" vector-effect="non-scaling-stroke" stroke-linecap="butt" stroke-linejoin="miter" shape-rendering="crispEdges"/>
<path transform="translate(49.00,4.50) scale(0.900,0.850)" d="M0,3 H10 M3,0 V6 M7,0 V5 Q7,8 3,10" fill="none" stroke="#fff" stroke-width="2" vector-effect="non-scaling-stroke" stroke-linecap="butt" stroke-linejoin="miter" shape-rendering="crispEdges"/>
<path transform="translate(61.00,4.50) scale(0.700,0.850)" d="M0,5 H10" fill="none" stroke="#fff" stroke-width="2" vector-effect="non-scaling-stroke" stroke-linecap="butt" stroke-linejoin="miter" shape-rendering="crispEdges"/>
<path transform="translate(71.00,4.50) scale(0.700,0.850)" d="M1,1 H9 M0,5 H10 M4,1 V9 Q4,10 6,10 H10" fill="none" stroke="#fff" stroke-width="2" vector-effect="non-scaling-stroke" stroke-linecap="butt" stroke-linejoin="miter" shape-rendering="crispEdges"/>
<path transform="translate(109.00,4.50) scale(0.600,0.850)" d="M0,5 H10" fill="none" stroke="#fff" stroke-width="2" vector-effect="non-scaling-stroke" stroke-linecap="butt" stroke-linejoin="miter" shape-rendering="crispEdges"/>
<path transform="translate(80.70,4.20) scale(1.060,0.910)" d="M0,0.5 H4 M0,2.5 H4.5 M0.5,4.5 H4 M0.5,6.5 H4 M0.5,8.5 H4 V10 H0.5 Z M5.5,4 H10 M8,0 V10" fill="none" stroke="#fff" stroke-width="1.4" vector-effect="non-scaling-stroke" stroke-linecap="square" stroke-linejoin="miter" shape-rendering="crispEdges"/>
<path transform="translate(93.70,4.20) scale(1.060,0.910)" d="M0.5,1 L1.5,2 M0,4 L1,5 M0,9.5 L1.5,7 M3,0.5 H6.5 V7 H3 Z M3,3 H6.5 M3,5 H6.5 M4,7 L3,10 M5.5,7 L6.5,9.5 M8,1 V7.5 M9.7,0 V9.8 L8.8,9.8" fill="none" stroke="#fff" stroke-width="1.4" vector-effect="non-scaling-stroke" stroke-linecap="square" stroke-linejoin="miter" shape-rendering="crispEdges"/>
<path transform="translate(119.70,4.20) scale(1.060,0.910)" d="M0,0.5 H4 M0,2.5 H4.5 M0.5,4.5 H4 M0.5,6.5 H4 M0.5,8.5 H4 V10 H0.5 Z M5.5,4 H10 M8,0 V10" fill="none" stroke="#fff" stroke-width="1.4" vector-effect="non-scaling-stroke" stroke-linecap="square" stroke-linejoin="miter" shape-rendering="crispEdges"/>
<path transform="translate(132.70,4.20) scale(1.160,0.910)" d="M0.5,1 L1.5,2 M0,4 L1,5 M0,9.5 L1.5,7 M3,0.5 H6.5 V7 H3 Z M3,3 H6.5 M3,5 H6.5 M4,7 L3,10 M5.5,7 L6.5,9.5 M8,1 V7.5 M9.7,0 V9.8 L8.8,9.8" fill="none" stroke="#fff" stroke-width="1.4" vector-effect="non-scaling-stroke" stroke-linecap="square" stroke-linejoin="miter" shape-rendering="crispEdges"/>
<path transform="translate(148.00,4.50) scale(0.300,0.850)" d="M0,3 L7,0 V10" fill="none" stroke="#fff" stroke-width="2" vector-effect="non-scaling-stroke" stroke-linecap="butt" stroke-linejoin="miter" shape-rendering="crispEdges"/>
<path transform="translate(160.00,4.50) scale(0.300,0.850)" d="M0,5 H10" fill="none" stroke="#fff" stroke-width="2" vector-effect="non-scaling-stroke" stroke-linecap="butt" stroke-linejoin="miter" shape-rendering="crispEdges"/>
<path transform="translate(173.00,4.50) scale(0.200,0.850)" d="M9,0 H2 V10 H9" fill="none" stroke="#fff" stroke-width="2" vector-effect="non-scaling-stroke" stroke-linecap="butt" stroke-linejoin="miter" shape-rendering="crispEdges"/>
<path transform="translate(190.50,4.50) scale(0.850,0.850)" d="M2.5,0 V10 M0,3 H2.5 L0,8.5 M2.5,6 Q5,3 7,3 V9 Q7,10 10,9.5" fill="none" stroke="#fff" stroke-width="2" vector-effect="non-scaling-stroke" stroke-linecap="butt" stroke-linejoin="miter" shape-rendering="crispEdges"/>
<path transform="translate(214.60,4.50) scale(0.940,0.850)" d="M4,0 L0.5,4 M3,1.5 H8.5 Q8,7 2,10 M8.5,0 L9.2,1.5 M10,0 L10.5,1.3" fill="none" stroke="#fff" stroke-width="2" vector-effect="non-scaling-stroke" stroke-linecap="butt" stroke-linejoin="miter" shape-rendering="crispEdges"/>
<path transform="translate(227.00,4.50) scale(0.600,0.850)" d="M2,0.5 H8 M1,3 H9 Q8.5,7.5 2.5,10" fill="none" stroke="#fff" stroke-width="2" vector-effect="non-scaling-stroke" stroke-linecap="butt" stroke-linejoin="miter" shape-rendering="crispEdges"/>
<path transform="translate(236.00,4.50) scale(0.600,0.850)" d="M1,1 H9 Q8.5,7 2,10" fill="none" stroke="#fff" stroke-width="2" vector-effect="non-scaling-stroke" stroke-linecap="butt" stroke-linejoin="miter" shape-rendering="crispEdges"/>
<path transform="translate(177.70,4.20) scale(1.060,0.910)" d="M0,3.5 H4 M2,0 V10 L1,9.5 M0,8 L4,6 M9.5,0.5 L5.5,1.5 V6 Q5.5,9 4.5,10 M5.5,4.5 H10 M8,4.5 V10" fill="none" stroke="#fff" stroke-width="1.4" vector-effect="non-scaling-stroke" stroke-linecap="square" stroke-linejoin="miter" shape-rendering="crispEdges"/>
<path transform="translate(200.70,4.20) scale(1.160,0.910)" d="M2.5,0 L0.5,3.5 L4,3 M3.5,1.5 L0,6.5 H4.5 M2.5,6.5 V10 M1,8 L0,9.5 M4,8 L4.5,9.5 M7,0 L6,1 M5.5,1.5 H9.5 V5 H5.5 Z M5.5,3.2 H9.5 M7.5,5 V10 L6.5,9.5 M5,7.5 L7,6.5 M9.5,6 L8,7.5 L10,10" fill="none" stroke="#fff" stroke-width="1.4" vector-effect="non-scaling-stroke" stroke-linecap="square" stroke-linejoin="miter" shape-rendering="crispEdges"/>
<path transform="translate(248.00,4.50) scale(0.300,0.850)" d="M0,3 L7,0 V10" fill="none" stroke="#fff" stroke-width="2" vector-effect="non-scaling-stroke" stroke-linecap="butt" stroke-linejoin="miter" shape-rendering="crispEdges"/>
<path transform="translate(255.00,4.50) scale(0.200,0.850)" d="M1,0 H8 V10 H1" fill="none" stroke="#fff" stroke-width="2" vector-effect="non-scaling-stroke" stroke-linecap="butt" stroke-linejoin="miter" shape-rendering="crispEdges"/>
<g transform="translate(1,1)"><path transform="translate(27.50,22.50) scale(0.500,0.900)" d="M1,2 H9 Q9,7 2,10" fill="none" stroke="#fff" stroke-width="1" vector-effect="non-scaling-stroke" stroke-linecap="square" stroke-linejoin="miter" shape-rendering="crispEdges"/>
<path transform="translate(34.50,22.50) scale(0.500,0.900)" d="M1,4.5 H9 L7,6 M5,5.5 Q5,9 1,10" fill="none" stroke="#fff" stroke-width="1" vector-effect="non-scaling-stroke" stroke-linecap="square" stroke-linejoin="miter" shape-rendering="crispEdges"/>
<path transform="translate(40.50,22.50) scale(0.500,0.900)" d="M9,1 L1,6 M6,3.5 V10" fill="none" stroke="#fff" stroke-width="1" vector-effect="non-scaling-stroke" stroke-linecap="square" stroke-linejoin="miter" shape-rendering="crispEdges"/>
<path transform="translate(46.50,22.50) scale(0.700,0.900)" d="M2.5,2 V6 Q2.5,9 0.5,10 M6,1.5 V9.5 L9.5,7" fill="none" stroke="#fff" stroke-width="1" vector-effect="non-scaling-stroke" stroke-linecap="square" stroke-linejoin="miter" shape-rendering="crispEdges"/><text x="56" y="31" font-family="Liberation Sans" font-size="11" fill="#fff" letter-spacing="-0.3">(F)</text></g>
<path transform="translate(27.50,22.50) scale(0.500,0.900)" d="M1,2 H9 Q9,7 2,10" fill="none" stroke="#808080" stroke-width="1" vector-effect="non-scaling-stroke" stroke-linecap="square" stroke-linejoin="miter" shape-rendering="crispEdges"/>
<path transform="translate(34.50,22.50) scale(0.500,0.900)" d="M1,4.5 H9 L7,6 M5,5.5 Q5,9 1,10" fill="none" stroke="#808080" stroke-width="1" vector-effect="non-scaling-stroke" stroke-linecap="square" stroke-linejoin="miter" shape-rendering="crispEdges"/>
<path transform="translate(40.50,22.50) scale(0.500,0.900)" d="M9,1 L1,6 M6,3.5 V10" fill="none" stroke="#808080" stroke-width="1" vector-effect="non-scaling-stroke" stroke-linecap="square" stroke-linejoin="miter" shape-rendering="crispEdges"/>
<path transform="translate(46.50,22.50) scale(0.700,0.900)" d="M2.5,2 V6 Q2.5,9 0.5,10 M6,1.5 V9.5 L9.5,7" fill="none" stroke="#808080" stroke-width="1" vector-effect="non-scaling-stroke" stroke-linecap="square" stroke-linejoin="miter" shape-rendering="crispEdges"/><text x="56" y="31" font-family="Liberation Sans" font-size="11" fill="#808080" letter-spacing="-0.3">(F)</text>
<path transform="translate(84.50,22.50) scale(1.000,0.900)" d="M1,0.8 H9 M1,2.8 H9 M0,4.8 H10 M5,0 V4.8 M5,4.8 L1,10 M3,7 V10 L5,9 M5,6 Q7,9 10,10 M9,5.5 L7,7" fill="none" stroke="#000" stroke-width="1" vector-effect="non-scaling-stroke" stroke-linecap="square" stroke-linejoin="miter" shape-rendering="crispEdges"/>
<path transform="translate(96.50,22.50) scale(1.000,0.900)" d="M2,1 H8 M0,4 H10 M5,4 V10 L4,9.5 M2.5,6 L0.5,9 M7.5,6 L9.5,9" fill="none" stroke="#000" stroke-width="1" vector-effect="non-scaling-stroke" stroke-linecap="square" stroke-linejoin="miter" shape-rendering="crispEdges"/><text x="108" y="31" font-family="Liberation Sans" font-size="11" fill="#000" letter-spacing="-0.3">(D)</text>
<path transform="translate(138.50,22.50) scale(1.000,0.900)" d="M0,0.5 H4 M0,2.5 H4.5 M0.5,4.5 H4 M0.5,6.5 H4 M0.5,8.5 H4 V10 H0.5 Z M6,0.5 V3 Q6,4.5 5,4.5 M6,0.5 H8.5 V3.5 H10 M5.5,6 H9.5 Q8,9 5,10 M6.5,7 Q8,9.5 10,10" fill="none" stroke="#000" stroke-width="1" vector-effect="non-scaling-stroke" stroke-linecap="square" stroke-linejoin="miter" shape-rendering="crispEdges"/>
<path transform="translate(150.50,22.50) scale(1.000,0.900)" d="M5,0 V1.5 M0.5,3 V1.5 H9.5 V3 M2,4 H8 M5,4 V9 M5,6.5 H8.5 M2.5,5.5 Q2.5,9 0.5,10 M2.5,8 Q5,10 10,10" fill="none" stroke="#000" stroke-width="1" vector-effect="non-scaling-stroke" stroke-linecap="square" stroke-linejoin="miter" shape-rendering="crispEdges"/><text x="162" y="31" font-family="Liberation Sans" font-size="11" fill="#000" letter-spacing="-0.3">(Z)</text>
<path transform="translate(191.50,22.50) scale(0.900,0.900)" d="M0.5,1 L1.5,2 M0,4 L1,5 M0,9.5 L1.5,7 M3,0.5 H6.5 V7 H3 Z M3,3 H6.5 M3,5 H6.5 M4,7 L3,10 M5.5,7 L6.5,9.5 M8,1 V7.5 M9.7,0 V9.8 L8.8,9.8" fill="none" stroke="#000" stroke-width="1" vector-effect="non-scaling-stroke" stroke-linecap="square" stroke-linejoin="miter" shape-rendering="crispEdges"/>
<path transform="translate(203.50,22.50) scale(1.000,0.900)" d="M5,0 V1.5 M0.5,3 V1.5 H9.5 V3 M2,4 H8 M5,4 V9 M5,6.5 H8.5 M2.5,5.5 Q2.5,9 0.5,10 M2.5,8 Q5,10 10,10" fill="none" stroke="#000" stroke-width="1" vector-effect="non-scaling-stroke" stroke-linecap="square" stroke-linejoin="miter" shape-rendering="crispEdges"/><text x="215" y="31" font-family="Liberation Sans" font-size="11" fill="#000" letter-spacing="-0.3">(S)</text>
<path transform="translate(243.50,22.50) scale(0.600,0.900)" d="M5,0 V2 M1,2 H9 V5 Q8,9 2,10 M1,2 V5" fill="none" stroke="#000" stroke-width="1" vector-effect="non-scaling-stroke" stroke-linecap="square" stroke-linejoin="miter" shape-rendering="crispEdges"/>
<path transform="translate(251.50,22.50) scale(0.400,0.900)" d="M9,3.5 L1,7.5 M6,5.5 V10" fill="none" stroke="#000" stroke-width="1" vector-effect="non-scaling-stroke" stroke-linecap="square" stroke-linejoin="miter" shape-rendering="crispEdges"/>
<path transform="translate(257.50,22.50) scale(0.500,0.900)" d="M1,2 L3,4 M0.5,10 Q8,9 9.5,3" fill="none" stroke="#000" stroke-width="1" vector-effect="non-scaling-stroke" stroke-linecap="square" stroke-linejoin="miter" shape-rendering="crispEdges"/>
<path transform="translate(264.50,22.50) scale(0.500,0.900)" d="M3,0.5 V10 M3,4.5 L9,7" fill="none" stroke="#000" stroke-width="1" vector-effect="non-scaling-stroke" stroke-linecap="square" stroke-linejoin="miter" shape-rendering="crispEdges"/>
<path transform="translate(270.50,22.50) scale(0.200,0.900)" d="M2,0 L5,2.5 M6,0 L9,2.5" fill="none" stroke="#000" stroke-width="1" vector-effect="non-scaling-stroke" stroke-linecap="square" stroke-linejoin="miter" shape-rendering="crispEdges"/>
<path transform="translate(273.50,22.50) scale(0.600,0.900)" d="M5,0 V2 M1,2 H9 V5 Q8,9 2,10 M1,2 V5" fill="none" stroke="#000" stroke-width="1" vector-effect="non-scaling-stroke" stroke-linecap="square" stroke-linejoin="miter" shape-rendering="crispEdges"/><text x="281" y="31" font-family="Liberation Sans" font-size="11" fill="#000" letter-spacing="-0.3">(W)</text>
<path transform="translate(311.50,22.50) scale(0.500,0.900)" d="M0,7 L3,3 L10,9" fill="none" stroke="#000" stroke-width="1" vector-effect="non-scaling-stroke" stroke-linecap="square" stroke-linejoin="miter" shape-rendering="crispEdges"/>
<path transform="translate(318.50,22.50) scale(0.600,0.900)" d="M2.5,2 V6 Q2.5,9 0.5,10 M6,1.5 V9.5 L9.5,7" fill="none" stroke="#000" stroke-width="1" vector-effect="non-scaling-stroke" stroke-linecap="square" stroke-linejoin="miter" shape-rendering="crispEdges"/>
<path transform="translate(327.50,22.50) scale(0.400,0.900)" d="M1,2 H9 Q9,7 2,10" fill="none" stroke="#000" stroke-width="1" vector-effect="non-scaling-stroke" stroke-linecap="square" stroke-linejoin="miter" shape-rendering="crispEdges"/>
<path transform="translate(333.50,22.50) scale(0.400,0.900)" d="M5,1.5 A2.5,1.5 0 1 0 5.01,1.5" fill="none" stroke="#000" stroke-width="1" vector-effect="non-scaling-stroke" stroke-linecap="square" stroke-linejoin="miter" shape-rendering="crispEdges"/><text x="337" y="31" font-family="Liberation Sans" font-size="11" fill="#000" letter-spacing="-0.3">(H)</text>
<g fill="#000"><rect x="59" y="32" width="7" height="1" fill="#808080"/><rect x="112" y="32" width="8" height="1"/><rect x="165" y="32" width="8" height="1"/><rect x="218" y="32" width="8" height="1"/><rect x="285" y="32" width="9" height="1"/><rect x="341" y="32" width="8" height="1"/></g>
<path transform="translate(24.50,678.50) scale(0.800,1.200)" d="M0.5,1 H9.5 Q8.5,4 6.5,5 M5,3.5 Q5,8 1.5,10" fill="none" stroke="#000" stroke-width="1" vector-effect="non-scaling-stroke" stroke-linecap="square" stroke-linejoin="miter" shape-rendering="crispEdges"/>
<path transform="translate(35.50,678.50) scale(0.800,1.200)" d="M2,0.5 H8 M1,3 H9 Q8.5,7.5 2.5,10" fill="none" stroke="#000" stroke-width="1" vector-effect="non-scaling-stroke" stroke-linecap="square" stroke-linejoin="miter" shape-rendering="crispEdges"/>
<path transform="translate(44.50,678.50) scale(0.500,1.200)" d="M0,5 H10" fill="none" stroke="#000" stroke-width="1" vector-effect="non-scaling-stroke" stroke-linecap="square" stroke-linejoin="miter" shape-rendering="crispEdges"/>
<path transform="translate(50.50,678.50) scale(0.800,1.200)" d="M4.5,0 L1,9.5 H9 M7,6 L9.5,10" fill="none" stroke="#000" stroke-width="1" vector-effect="non-scaling-stroke" stroke-linecap="square" stroke-linejoin="miter" shape-rendering="crispEdges"/>
<path transform="translate(62.50,678.50) scale(0.500,1.200)" d="M2,0.5 V6.5 M8,0 V5 Q8,8.5 4,10" fill="none" stroke="#000" stroke-width="1" vector-effect="non-scaling-stroke" stroke-linecap="square" stroke-linejoin="miter" shape-rendering="crispEdges"/>
<path transform="translate(70.50,678.50) scale(0.600,1.200)" d="M0,4 H9.5 L7.5,6.5 M3,0 V9 Q3,10 4.5,10 H9.5" fill="none" stroke="#000" stroke-width="1" vector-effect="non-scaling-stroke" stroke-linecap="square" stroke-linejoin="miter" shape-rendering="crispEdges"/>
<path transform="translate(77.50,678.50) scale(0.500,1.200)" d="M1,3.5 L2,5.5 M4,3 L5,5 M8.5,3 Q8.5,8 3,10" fill="none" stroke="#000" stroke-width="1" vector-effect="non-scaling-stroke" stroke-linecap="square" stroke-linejoin="miter" shape-rendering="crispEdges"/>
<path transform="translate(84.50,678.50) scale(0.700,1.200)" d="M3,0.5 V10 M3,4.5 L9,7" fill="none" stroke="#000" stroke-width="1" vector-effect="non-scaling-stroke" stroke-linecap="square" stroke-linejoin="miter" shape-rendering="crispEdges"/>
<path transform="translate(2.50,722.50) scale(1.000,1.000)" d="M3,0 L0.5,4.5 M1.8,2.5 V10 M4.5,0.5 H9.5 V4 H4.5 Z M3.5,5.5 H10 M7,4 V10 M7,6 L3.5,9.5 M7,6 L10,9.5" fill="none" stroke="#000" stroke-width="1" vector-effect="non-scaling-stroke" stroke-linecap="square" stroke-linejoin="miter" shape-rendering="crispEdges"/>
<path transform="translate(14.50,722.50) scale(1.000,1.000)" d="M0,2.5 H10 M4,0 L0.5,8 M2,5 V10 M5,5 H9 L7,6.5 M7,6.5 V10 L6,9.5 M4.5,7.5 H10" fill="none" stroke="#000" stroke-width="1" vector-effect="non-scaling-stroke" stroke-linecap="square" stroke-linejoin="miter" shape-rendering="crispEdges"/>
<path transform="translate(26.50,722.50) scale(0.700,1.000)" d="M5,0 V1.8 M1,2 H9 V4.5 Q8.5,8 3,10 M1,2 V5" fill="none" stroke="#000" stroke-width="1" vector-effect="non-scaling-stroke" stroke-linecap="square" stroke-linejoin="miter" shape-rendering="crispEdges"/>
<path transform="translate(35.50,722.50) scale(0.500,1.000)" d="M1.5,4 H8.5 M5,4 V9.5 M0.5,9.5 H9.5" fill="none" stroke="#000" stroke-width="1" vector-effect="non-scaling-stroke" stroke-linecap="square" stroke-linejoin="miter" shape-rendering="crispEdges"/>
<path transform="translate(42.50,722.50) scale(0.600,1.000)" d="M9.5,0.5 Q6,4 0.5,6.5 M6,3.5 V10" fill="none" stroke="#000" stroke-width="1" vector-effect="non-scaling-stroke" stroke-linecap="square" stroke-linejoin="miter" shape-rendering="crispEdges"/>
<path transform="translate(53.50,722.50) scale(0.500,1.000)" d="M3,0 V10 M3,4 L9,7" fill="none" stroke="#000" stroke-width="1" vector-effect="non-scaling-stroke" stroke-linecap="square" stroke-linejoin="miter" shape-rendering="crispEdges"/>
<path transform="translate(63.50,722.50) scale(0.200,1.000)" d="M5,0 V7 M5,9 V10" fill="none" stroke="#000" stroke-width="1" vector-effect="non-scaling-stroke" stroke-linecap="square" stroke-linejoin="miter" shape-rendering="crispEdges"/>
<path transform="translate(75.50,722.50) scale(0.200,1.000)" d="M5,0 V7 M5,9 V10" fill="none" stroke="#000" stroke-width="1" vector-effect="non-scaling-stroke" stroke-linecap="square" stroke-linejoin="miter" shape-rendering="crispEdges"/>
<path transform="translate(23.00,747.00) scale(0.800,0.900)" d="M1,1 H9 Q7,7 0.5,10 M6,6 L9.5,10" fill="none" stroke="#000" stroke-width="2" vector-effect="non-scaling-stroke" stroke-linecap="butt" stroke-linejoin="miter" shape-rendering="crispEdges"/>
<path transform="translate(33.00,747.00) scale(0.600,0.900)" d="M4,0 Q3,3 0.5,5 M3.5,1.5 H9 Q8,7 2,10 M3,4.5 L8,7" fill="none" stroke="#000" stroke-width="2" vector-effect="non-scaling-stroke" stroke-linecap="butt" stroke-linejoin="miter" shape-rendering="crispEdges"/>
<path transform="translate(43.00,747.00) scale(0.700,0.900)" d="M0,5 H10" fill="none" stroke="#000" stroke-width="2" vector-effect="non-scaling-stroke" stroke-linecap="butt" stroke-linejoin="miter" shape-rendering="crispEdges"/>
<path transform="translate(54.00,747.00) scale(0.500,0.900)" d="M3,0 V10 M3,4 L9,7" fill="none" stroke="#000" stroke-width="2" vector-effect="non-scaling-stroke" stroke-linecap="butt" stroke-linejoin="miter" shape-rendering="crispEdges"/>
<path transform="translate(186.00,749.00) scale(0.600,1.000)" d="M1,1 L3,4 M9,1 Q9,7 2,10" fill="none" stroke="#000" stroke-width="2" vector-effect="non-scaling-stroke" stroke-linecap="butt" stroke-linejoin="miter" shape-rendering="crispEdges"/>
<path transform="translate(196.00,749.00) scale(0.700,1.000)" d="M1,1 H9 Q8.5,7 2,10" fill="none" stroke="#000" stroke-width="2" vector-effect="non-scaling-stroke" stroke-linecap="butt" stroke-linejoin="miter" shape-rendering="crispEdges"/>
<path transform="translate(206.00,749.00) scale(0.600,1.000)" d="M3,0 V10 M3,4 L9,7" fill="none" stroke="#000" stroke-width="2" vector-effect="non-scaling-stroke" stroke-linecap="butt" stroke-linejoin="miter" shape-rendering="crispEdges"/>
<path transform="translate(213.00,749.00) scale(0.800,1.000)" d="M0,3 H10 M3,0 V6 M7,0 V5 Q7,8 3,10" fill="none" stroke="#000" stroke-width="2" vector-effect="non-scaling-stroke" stroke-linecap="butt" stroke-linejoin="miter" shape-rendering="crispEdges"/>
<path transform="translate(223.00,749.00) scale(0.600,1.000)" d="M0,5 H10" fill="none" stroke="#000" stroke-width="2" vector-effect="non-scaling-stroke" stroke-linecap="butt" stroke-linejoin="miter" shape-rendering="crispEdges"/>
<path transform="translate(235.00,749.00) scale(0.800,1.000)" d="M1,1 H9 M0,5 H10 M4,1 V9 Q4,10 6,10 H10" fill="none" stroke="#000" stroke-width="2" vector-effect="non-scaling-stroke" stroke-linecap="butt" stroke-linejoin="miter" shape-rendering="crispEdges"/>
<text x="254" y="759" font-family="Liberation Sans" font-size="12" font-weight="bold" fill="#000">E830</text></svg>
</body></html>
